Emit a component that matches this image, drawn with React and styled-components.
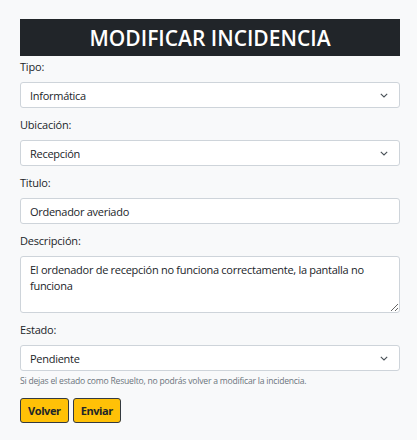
import React from "react";
import styled, { createGlobalStyle } from "styled-components";

const GlobalStyle = createGlobalStyle`
  body {
    margin: 0;
    background: #f8f9fa;
    font-family: "Open Sans", "Noto Sans", sans-serif;
    color: #212529;
  }
`;

const Page = styled.div`
  padding: 19px 17px 16px 20px;
`;

const Form = styled.form`
  width: 380px;
`;

const TitleBar = styled.h1`
  margin: 0 0 2px;
  height: 37px;
  background: #212529;
  color: #fff;
  font-size: 21px;
  font-weight: 600;
  display: flex;
  align-items: center;
  justify-content: center;
`;

const Field = styled.div`
  margin-bottom: 8px;
`;

const Label = styled.label`
  display: block;
  font-size: 11px;
  letter-spacing: -0.2px;
  line-height: 18px;
  margin-bottom: 6px;
  color: #212529;
`;

const controlBase = `
  box-sizing: border-box;
  width: 100%;
  background: #fff;
  border: 1px solid #ced4da;
  border-radius: 3px;
  font-family: "Open Sans", "Noto Sans", sans-serif;
  font-size: 11px;
  letter-spacing: -0.28px;
  color: #212529;
  padding: 0 9px;
`;

const SelectBox = styled.div`
  ${controlBase}
  height: 26px;
  display: flex;
  align-items: center;
  justify-content: space-between;
  padding-right: 11px;
`;

const TextInput = styled.input`
  ${controlBase}
  height: 26px;
  outline: none;
`;

const TextArea = styled.textarea`
  ${controlBase}
  display: block;
  height: 57px;
  padding: 5px 9px;
  line-height: 16px;
  resize: vertical;
  outline: none;
`;

const Help = styled.div`
  font-size: 8.6px;
  letter-spacing: -0.22px;
  color: #6c757d;
  margin-top: 4px;
  line-height: 13px;
`;

const Buttons = styled.div`
  display: flex;
  gap: 4px;
  margin-top: 10px;
`;

const Button = styled.button`
  height: 25px;
  padding: 0 7px;
  background: #ffc107;
  border: 1px solid #343a40;
  border-radius: 3px;
  font-family: "Open Sans", "Noto Sans", sans-serif;
  font-size: 11px;
  letter-spacing: -0.4px;
  font-weight: 700;
  color: #212529;
`;

const Chevron = () => (
  <svg width="8" height="5" viewBox="0 0 8 5">
    <polyline points="0.8,0.8 4,4 7.2,0.8" fill="none" stroke="#495057" strokeWidth="1.1" />
  </svg>
);

const Select = ({ value }) => (
  <SelectBox>
    <span>{value}</span>
    <Chevron />
  </SelectBox>
);

export default function App() {
  return (
    <Page>
      <GlobalStyle />
      <Form>
        <TitleBar>MODIFICAR INCIDENCIA</TitleBar>
        <Field>
          <Label>Tipo:</Label>
          <Select value="Informática" />
        </Field>
        <Field>
          <Label>Ubicación:</Label>
          <Select value="Recepción" />
        </Field>
        <Field>
          <Label>Titulo:</Label>
          <TextInput defaultValue="Ordenador averiado" />
        </Field>
        <Field>
          <Label>Descripción:</Label>
          <TextArea defaultValue="El ordenador de recepción no funciona correctamente, la pantalla no funciona" />
        </Field>
        <div>
          <Label>Estado:</Label>
          <Select value="Pendiente" />
          <Help>Si dejas el estado como Resuelto, no podrás volver a modificar la incidencia.</Help>
        </div>
        <Buttons>
          <Button type="button">Volver</Button>
          <Button type="button">Enviar</Button>
        </Buttons>
      </Form>
    </Page>
  );
}
